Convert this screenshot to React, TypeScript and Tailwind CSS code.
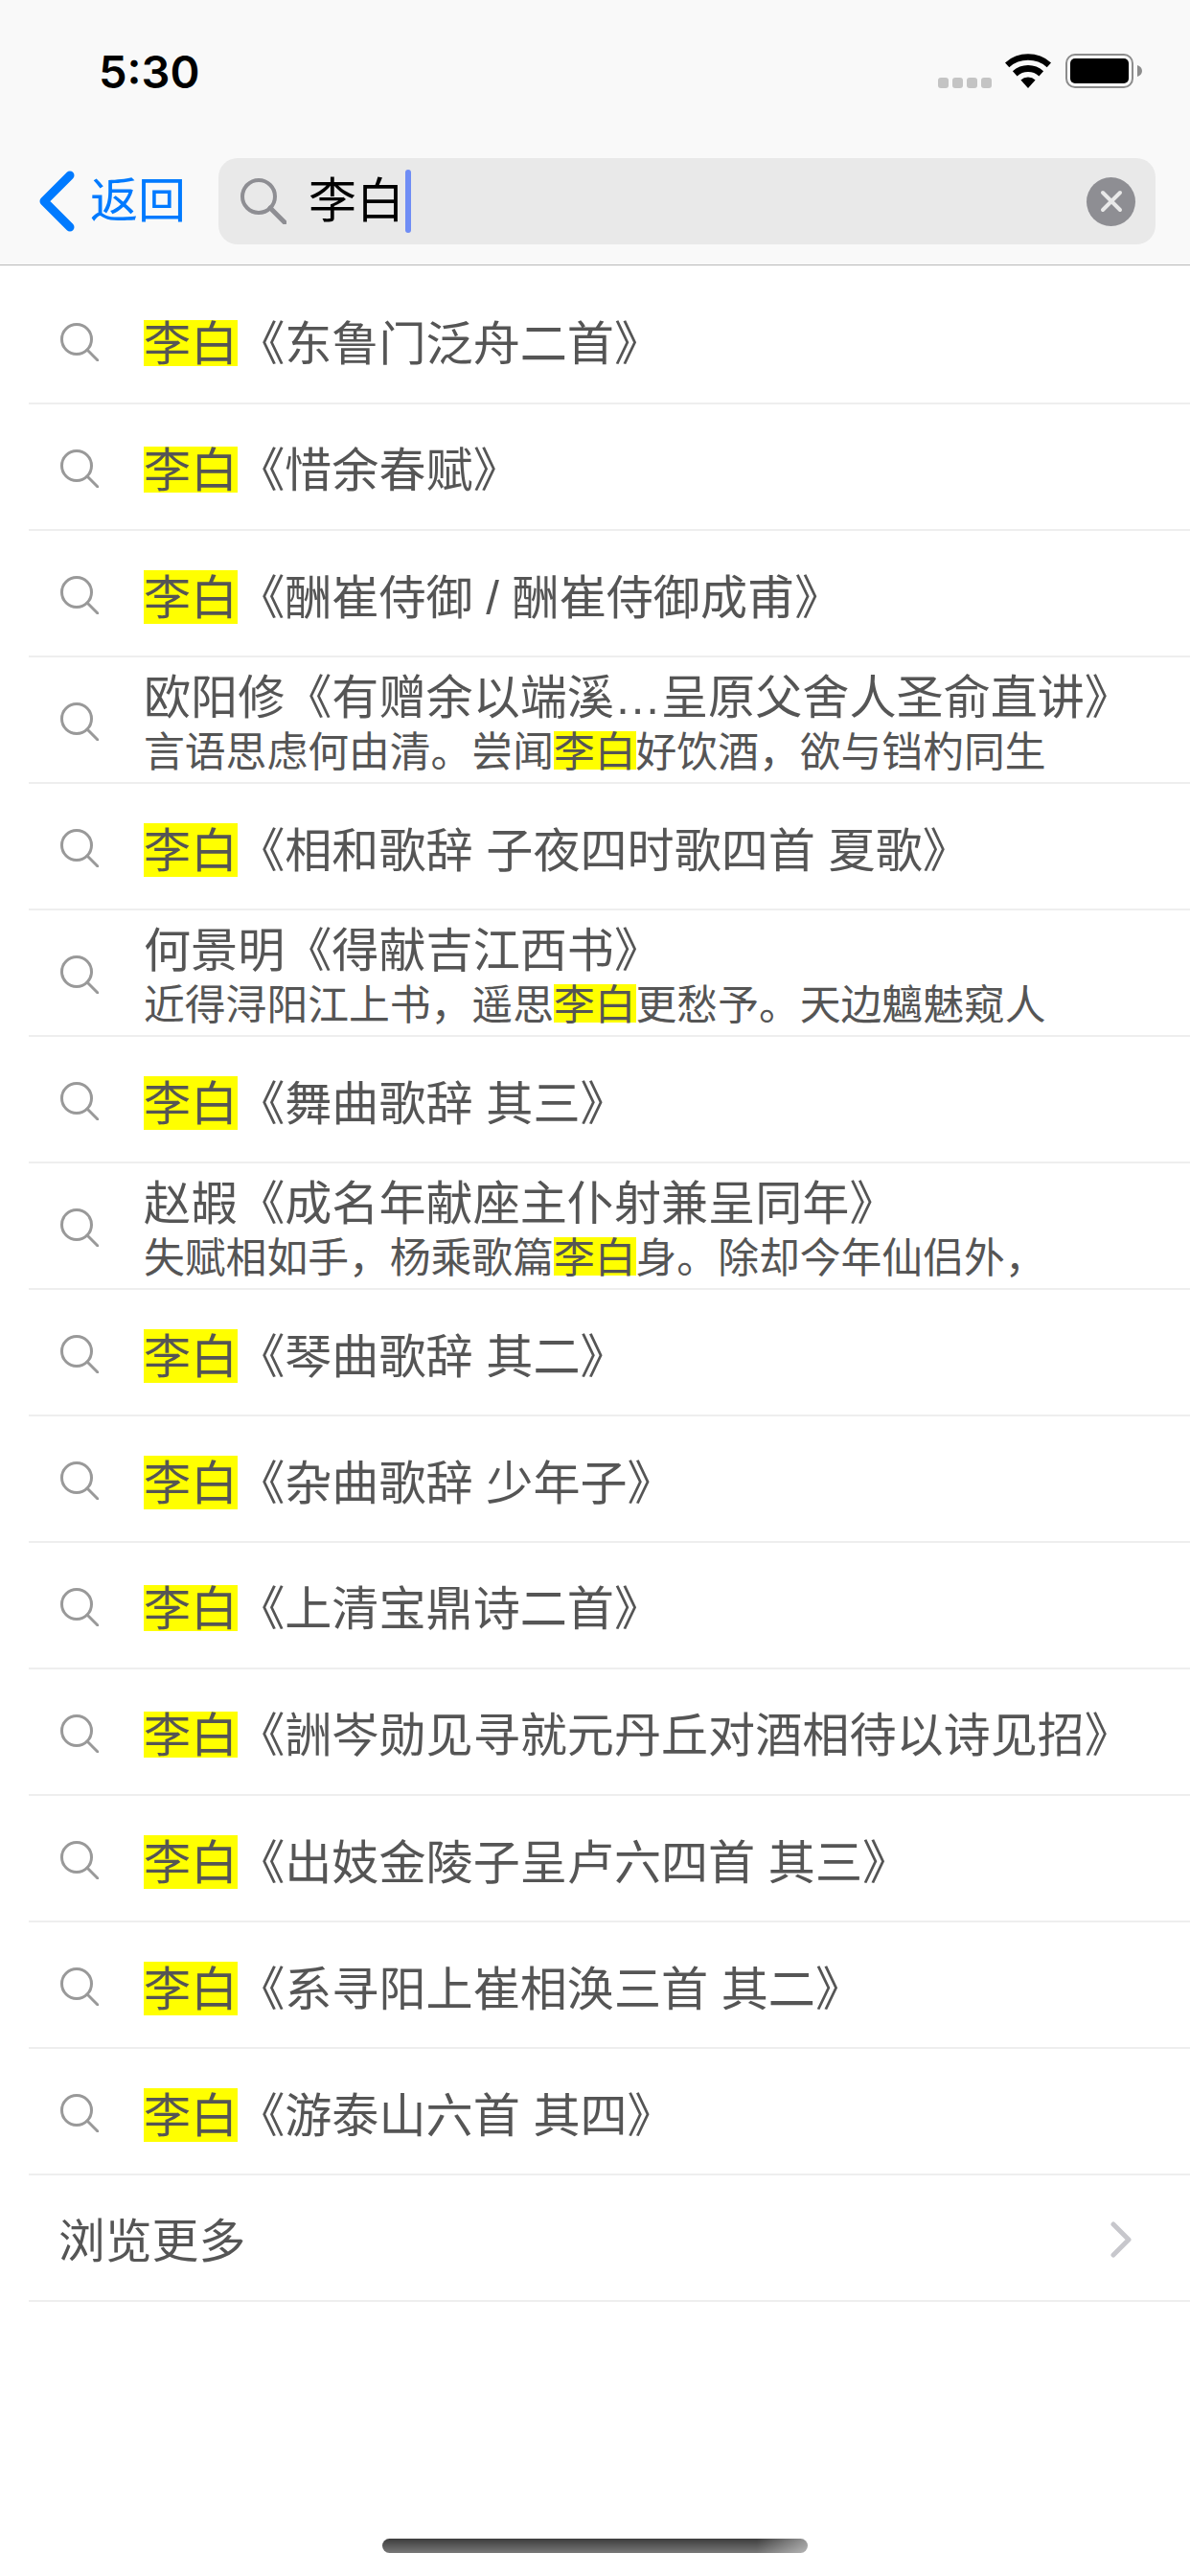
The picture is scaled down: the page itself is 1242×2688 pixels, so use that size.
const textFont = "font-['Liberation_Sans','Noto_Sans_CJK_SC',sans-serif] [text-spacing-trim:space-all]";

type Row = { title: string; line?: string[] };

// line holds [before, keyword, after] for rows that quote a verse
const rows: Row[] = [
  { title: "《东鲁门泛舟二首》" },
  { title: "《惜余春赋》" },
  { title: "《酬崔侍御 / 酬崔侍御成甫》" },
  { title: "欧阳修《有赠余以端溪…呈原父舍人圣俞直讲》", line: ["言语思虑何由清。尝闻", "李白", "好饮酒，欲与铛杓同生"] },
  { title: "《相和歌辞 子夜四时歌四首 夏歌》" },
  { title: "何景明《得献吉江西书》", line: ["近得浔阳江上书，遥思", "李白", "更愁予。天边魑魅窥人"] },
  { title: "《舞曲歌辞 其三》" },
  { title: "赵嘏《成名年献座主仆射兼呈同年》", line: ["失赋相如手，杨乘歌篇", "李白", "身。除却今年仙侣外，"] },
  { title: "《琴曲歌辞 其二》" },
  { title: "《杂曲歌辞 少年子》" },
  { title: "《上清宝鼎诗二首》" },
  { title: "《詶岑勋见寻就元丹丘对酒相待以诗见招》" },
  { title: "《出妓金陵子呈卢六四首 其三》" },
  { title: "《系寻阳上崔相涣三首 其二》" },
  { title: "《游泰山六首 其四》" },
];

function StatusBar() {
  return (
    <div className="flex h-[165px] items-start justify-between pl-[103px] pr-[50px] pt-[49px]">
      <span className="font-['Inter',sans-serif] text-[47px] leading-[52px] font-semibold text-black">5:30</span>
      <div className="flex items-end pt-[7px]">
        <div className="mr-[14px] flex gap-[4px]">
          {[0, 1, 2, 3].map((i) => (
            <div key={i} className="h-[11px] w-[11px] rounded-[3px] bg-[#c4c4c4]" />
          ))}
        </div>
        <svg width="48" height="36" viewBox="0 0 48 36" className="mr-[15px]">
          <path d="M24 36 16.4 27.6a11 11 0 0 1 15.2 0Z" fill="#000" />
          <path d="M12.6 23.4 7.9 18.2a24 24 0 0 1 32.2 0l-4.7 5.2a17 17 0 0 0-22.8 0Z" fill="#000" />
          <path d="M4.3 14.2 0 9.4a36 36 0 0 1 48 0l-4.3 4.8a29.5 29.5 0 0 0-39.4 0Z" fill="#000" />
        </svg>
        <div className="flex items-center">
          <div className="h-[36px] w-[71px] rounded-[10px] border-[2px] border-[#8c8c8c] p-[3px]">
            <div className="h-full w-full rounded-[5px] bg-black" />
          </div>
          <svg width="5" height="12" viewBox="0 0 5 12" className="ml-[4px]">
            <path d="M0 0c3 1 5 3 5 6s-2 5-5 6Z" fill="#8c8c8c" />
          </svg>
        </div>
      </div>
    </div>
  );
}

function NavBar() {
  return (
    <div className="flex h-[112px] items-start border-b border-[#b9b9b9]">
      <div className="flex h-[90px] w-[228px] shrink-0 items-center pl-[41px]">
        <svg width="37" height="64" viewBox="0 0 37 64" fill="none">
          <path d="M32 5 5 32l27 27" stroke="#007aff" strokeWidth="9" strokeLinecap="round" strokeLinejoin="round" />
        </svg>
        <span className={`${textFont} ml-[16px] text-[50px] leading-none text-[#007aff]`}>返回</span>
      </div>
      <div className="flex h-[90px] w-[978px] items-center rounded-[20px] bg-[#e9e9e9] pl-[23px] pr-[21px]">
        <svg width="48" height="48" viewBox="0 0 48 48" fill="none" className="shrink-0">
          <circle cx="19" cy="19" r="17" stroke="#8e8e93" strokeWidth="4" />
          <path d="M31 31 46 46" stroke="#8e8e93" strokeWidth="5" strokeLinecap="round" />
        </svg>
        <span className={`${textFont} ml-[23px] text-[50px] leading-none text-black`}>李白</span>
        <div className="ml-[1px] h-[66px] w-[6px] rounded-full bg-[#6f8df5]" />
        <div className="ml-auto flex h-[51px] w-[51px] items-center justify-center rounded-full bg-[#8e8e93]">
          <svg width="24" height="24" viewBox="0 0 24 24" fill="none">
            <path d="M3 3l18 18M21 3 3 21" stroke="#e9e9e9" strokeWidth="4" strokeLinecap="round" />
          </svg>
        </div>
      </div>
    </div>
  );
}

function RowIcon() {
  return (
    <svg width="40" height="40" viewBox="0 0 40 40" fill="none" className="mt-[4px] shrink-0">
      <circle cx="17" cy="17" r="15.5" stroke="#999999" strokeWidth="3" />
      <path d="M28 28 39 39" stroke="#999999" strokeWidth="3" strokeLinecap="round" />
    </svg>
  );
}

// Titles holding a space get a taller keyword mark, the others a shorter one
function KeywordTitle({ title }: { title: string }) {
  if (title.includes(" ")) {
    return (
      <div className="mt-[8px] h-[56px] text-[49.1px] leading-[58px]">
        <span className="inline-block h-[56px] bg-[#ffff00]">李白</span>
        {title}
      </div>
    );
  }
  return (
    <div className="mt-[6px] h-[48px] text-[49.1px] leading-[51px]">
      <span className="inline-block h-[48px] bg-[#ffff00]">李白</span>
      {title}
    </div>
  );
}

function ResultRow({ row }: { row: Row }) {
  return (
    <div className="flex h-[132px] items-center border-b-2 border-[#eeeeee] pl-[33px]">
      <RowIcon />
      <div className={`${textFont} ml-[47px] min-w-0 whitespace-nowrap text-[#555555]`}>
        {row.line ? (
          <>
            <div className="text-[49.1px] leading-[56px]">{row.title}</div>
            <div className="mt-[7px] h-[40px] text-[42.8px] leading-[44px]">
              {row.line[0]}
              <span className="inline-block h-[40px] bg-[#ffff00]">{row.line[1]}</span>
              {row.line[2]}
            </div>
          </>
        ) : (
          <KeywordTitle title={row.title} />
        )}
      </div>
    </div>
  );
}

export default function App() {
  return (
    <div className="flex h-[2688px] w-[1242px] flex-col overflow-hidden bg-white">
      <div className="bg-[#f9f9f9]">
        <StatusBar />
        <NavBar />
      </div>
      <div className="ml-[30px] pt-[13px]">
        {rows.map((row) => (
          <ResultRow key={row.title} row={row} />
        ))}
        <div className="flex h-[132px] items-center justify-between border-b-2 border-[#eeeeee] pl-[31px] pr-[60px]">
          <span className={`${textFont} mt-[8px] text-[48.8px] leading-none text-[#555555]`}>浏览更多</span>
          <svg width="24" height="38" viewBox="0 0 24 38" fill="none" className="mt-[4px]">
            <path d="M4 3l16 16L4 35" stroke="#c7c7cc" strokeWidth="5" strokeLinecap="round" strokeLinejoin="round" />
          </svg>
        </div>
      </div>
      <div className="mt-auto mb-[24px] flex justify-center">
        <div className="h-[15px] w-[444px] rounded-full bg-[linear-gradient(90deg,transparent_88%,rgba(255,255,255,0.45)_100%),linear-gradient(180deg,#3c3c3c,#787878)]" />
      </div>
    </div>
  );
}
